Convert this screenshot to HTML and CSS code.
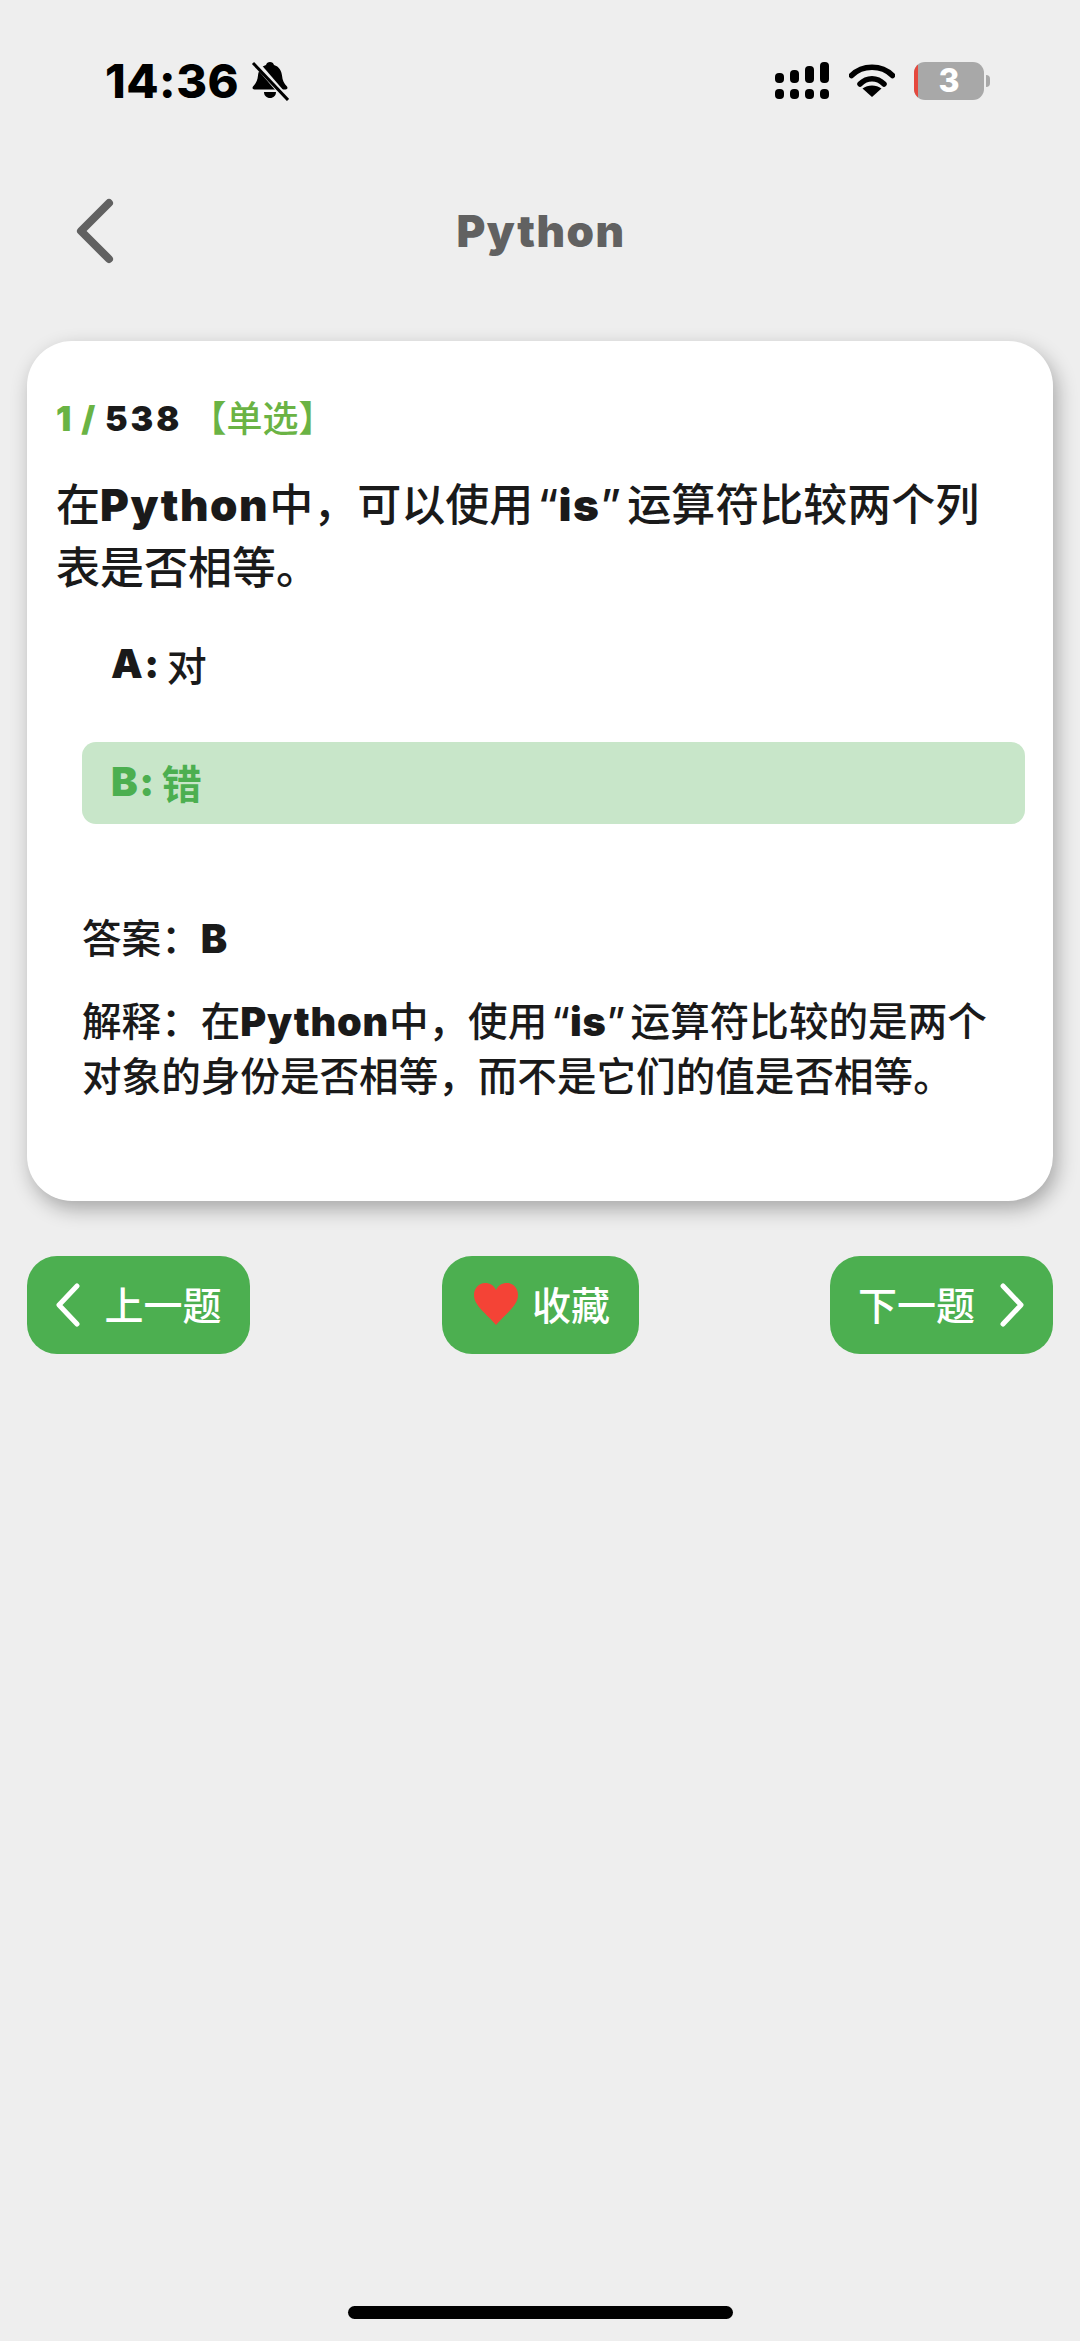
FILE: index.html
```html
<!DOCTYPE html>
<html lang="zh">
<head>
<meta charset="utf-8">
<title>Python</title>
<link rel="stylesheet" href="styles.css">
</head>
<body>
<div class="page">
  <header class="status">
    <div class="status-left">
      <span class="time">14:36</span>
      <svg class="bell" width="38" height="40" viewBox="0 0 38 40"><path d="M19 1c2 0 3.500 1.300 4 3 5 1.500 7.500 5.500 8 10.500.5 5 2 8 5 11 1 1.300.4 3-1.500 3H3.500C1.600 28.500 1 26.800 2 25.500c3-3 4.500-6 5-11 .5-5 3-9 8-10.500.5-1.700 2-3 4-3z" fill="#000"/><path d="M13 31h12c0 3.500-2.500 6-6 6s-6-2.500-6-6z" fill="#000"/><path d="M4 1l32 37" stroke="#eee" stroke-width="6"/><path d="M2 2l35 37" stroke="#000" stroke-width="3"/></svg>
    </div>
    <div class="status-right">
      <svg class="signal" width="54" height="38" viewBox="0 0 54 38"><g fill="#000"><rect x="0" y="11" width="9" height="10" rx="4"/><rect x="15" y="8" width="9" height="13" rx="4"/><rect x="30" y="4" width="9" height="17" rx="4"/><rect x="45" y="0" width="9" height="21" rx="4"/><rect x="0" y="27" width="9" height="10" rx="4"/><rect x="15" y="27" width="9" height="10" rx="4"/><rect x="30" y="27" width="9" height="10" rx="4"/><rect x="45" y="27" width="9" height="10" rx="4"/></g></svg>
      <svg class="wifi" width="46" height="36" viewBox="0 0 46 36"><path d="M2.500 12.500C13.500 1.500 32.500 1.500 43.500 12.500" fill="none" stroke="#000" stroke-width="5.500" stroke-linecap="round"/><path d="M11 21c7-7 17-7 24 0" fill="none" stroke="#000" stroke-width="5.500" stroke-linecap="round"/><path d="M23 34l-9.500-8.500c5.500-4 13.500-4 19 0z" fill="#000"/></svg>
      <div class="battery"><span class="battery-low"></span><span class="battery-num">3</span></div>
      <span class="battery-cap"></span>
    </div>
  </header>

  <nav class="nav">
    <svg class="nav-back" width="44" height="72" viewBox="0 0 44 72"><path d="M34 8L6 36l28 28" fill="none" stroke="#616161" stroke-width="8" stroke-linecap="round" stroke-linejoin="round"/></svg>
    <h1 class="nav-title">Python</h1>
  </nav>

  <main class="card">
    <div class="meta"><span class="meta-green">1 / </span><span class="meta-total">538</span><span class="meta-type">【单选】</span></div>
    <p class="question">在<b>Python</b>中，可以使用<span class="q-open">“</span><b>is</b><span class="q-close">”</span>运算符比较两个列表是否相等。</p>
    <div class="option"><b>A:</b> 对</div>
    <div class="option option-on"><b>B:</b> 错</div>
    <p class="answer">答案：<b>B</b></p>
    <p class="explain">解释：在<b>Python</b>中，使用<span class="q-open">“</span><b>is</b><span class="q-close">”</span>运算符比较的是两个对象的身份是否相等，而不是它们的值是否相等。</p>
  </main>

  <div class="actions">
    <button class="btn btn-prev"><svg width="26" height="44" viewBox="0 0 26 44"><path d="M22 3L4 22l18 19" fill="none" stroke="#fff" stroke-width="5" stroke-linecap="round" stroke-linejoin="round"/></svg><span>上一题</span></button>
    <button class="btn btn-fav"><svg width="46" height="44" viewBox="0 0 46 44"><path d="M23 42C14 31 1 23 1 12 1 5 6 0 12 0c5 0 9 2.500 11 7 2-4.500 6-7 11-7 6 0 11 5 11 12 0 11-13 19-22 30z" fill="#f44336"/></svg><span>收藏</span></button>
    <button class="btn btn-next"><span>下一题</span><svg width="26" height="44" viewBox="0 0 26 44"><path d="M4 3l18 19L4 41" fill="none" stroke="#fff" stroke-width="5" stroke-linecap="round" stroke-linejoin="round"/></svg></button>
  </div>
  <div class="spacer"></div>
  <div class="home"></div>
</div>
</body>
</html>
```
FILE: styles.css
```css
* { box-sizing: border-box; }
html, body { margin: 0; padding: 0; }
body {
  width: 1080px;
  height: 2341px;
  background: #eeeeee;
  font-family: "Inter", "Noto Sans CJK SC", sans-serif;
  color: #1a1a1a;
  overflow: hidden;
}
.page { height: 2341px; display: flex; flex-direction: column; }
b { font-weight: 900; letter-spacing: 1.500px; }
.q-open { padding-left: .1em; }
.q-close { padding-right: .14em; }

.status { height: 120px; padding: 0 90px 0 105px; display: flex; justify-content: space-between; align-items: center; }
.status-left { display: flex; align-items: center; gap: 12px; padding-top: 41px; }
.time { font-size: 47px; font-weight: 800; color: #000; line-height: 40px; letter-spacing: .5px; }
.status-right { display: flex; align-items: center; padding-top: 41px; }
.signal { margin-right: 20px; }
.wifi { margin-right: 19px; }
.battery { position: relative; width: 70px; height: 38px; background: #a8a8a8; border-radius: 11px; overflow: hidden; display: flex; align-items: center; justify-content: center; }
.battery-low { position: absolute; left: 0; top: 0; bottom: 0; width: 4px; background: #e5483d; }
.battery-num { color: #fff; font-size: 32px; font-weight: 800; line-height: 1; }
.battery-cap { width: 4px; height: 12px; margin-left: 2px; background: #a8a8a8; border-radius: 0 6px 6px 0; }

.nav { position: relative; height: 221px; display: flex; align-items: center; justify-content: center; padding-left: 2px; }
.nav-back { position: absolute; left: 75px; top: 75px; }
.nav-title { margin: 0; font-size: 44px; font-weight: 900; color: #616161; letter-spacing: 1.500px; }

.card { margin: 0 27px; height: 860px; background: #fff; border-radius: 45px; box-shadow: 4px 8px 20px rgba(0,0,0,.3); padding: 54px 40px 0 29px; }
.meta { font-size: 34px; line-height: 48px; font-weight: 900; display: flex; align-items: center; }
.meta-green { color: #6ab344; white-space: pre; letter-spacing: 1.500px; }
.meta-total { letter-spacing: 3px; }
.meta-type { color: #6ab344; font-size: 36px; font-weight: 500; margin-left: 8px; }
.question { margin: 31px 0 0; font-size: 44px; line-height: 63px; font-weight: 500; }
.option { margin: 24px 0 0 26px; height: 82px; padding: 0 29px 3px; border-radius: 14px; font-size: 40px; font-weight: 500; display: flex; align-items: center; gap: 6px; }
.option + .option { margin-top: 36px; margin-right: -12px; }
.option-on { background: #c8e6c9; color: #4caf50; font-weight: 700; }
.answer { margin: 88px 0 0 26px; font-size: 39.600px; line-height: 55px; font-weight: 500; }
.explain { margin: 28px 0 0 26px; font-size: 39.600px; line-height: 55px; font-weight: 500; }
.explain b { letter-spacing: .75px; }

.actions { margin: 55px 27px 0; display: flex; justify-content: space-between; }
.btn { height: 98px; border: 0; border-radius: 30px; background: #4caf50; color: #fff; font: 500 39px/1 "Noto Sans CJK SC", sans-serif; display: flex; align-items: center; justify-content: center; padding: 0; }
.btn span { position: relative; top: -2px; }
.btn-prev { width: 223px; gap: 23px; }
.btn-fav { width: 197px; gap: 13px; padding-left: 3px; }
.btn-next { width: 223px; gap: 24px; }
.spacer { flex: 1; }
.home { width: 385px; height: 13px; margin: 0 auto 22px; background: #000; border-radius: 7px; }
```
